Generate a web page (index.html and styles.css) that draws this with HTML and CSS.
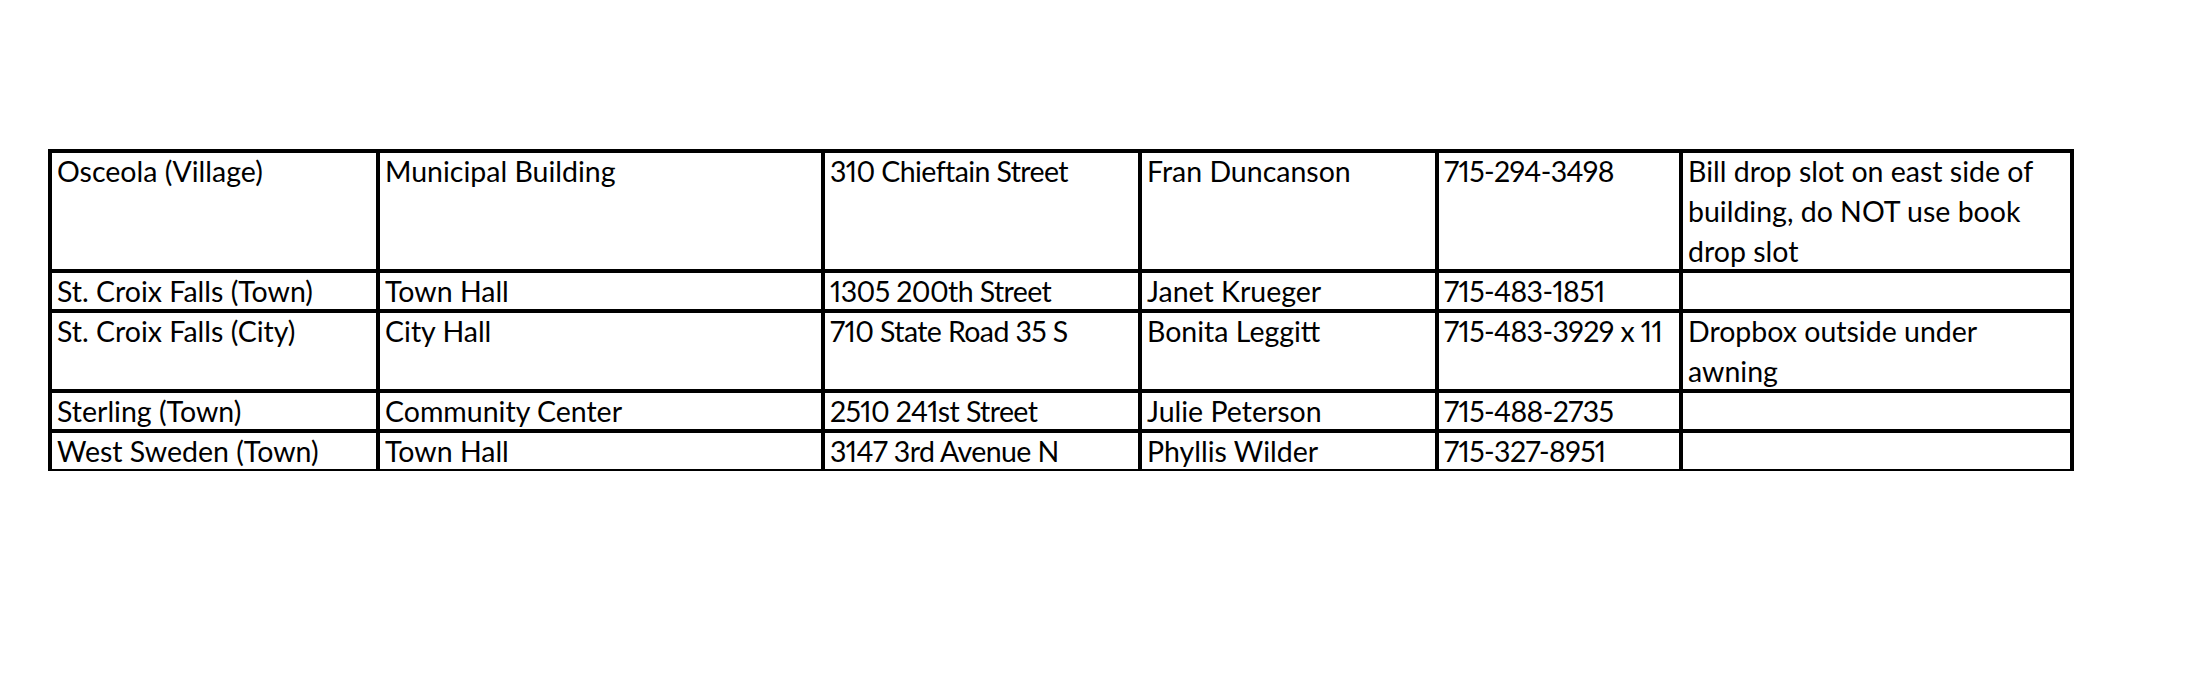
FILE: index.html
```html
<!DOCTYPE html>
<html lang="en">
<head>
<meta charset="utf-8">
<title>Polling Places</title>
<link rel="stylesheet" href="styles.css">
</head>
<body>
<table class="sites">
  <colgroup>
    <col class="c-muni">
    <col class="c-place">
    <col class="c-addr">
    <col class="c-clerk">
    <col class="c-phone">
    <col class="c-notes">
  </colgroup>
  <tbody>
    <tr>
      <td>Osceola (Village)</td>
      <td>Municipal Building</td>
      <td class="num">310 Chieftain Street</td>
      <td>Fran Duncanson</td>
      <td class="num">715-294-3498</td>
      <td>Bill drop slot on east side of<br>building, do NOT use book<br>drop slot</td>
    </tr>
    <tr>
      <td>St. Croix Falls (Town)</td>
      <td>Town Hall</td>
      <td class="num">1305 200th Street</td>
      <td>Janet Krueger</td>
      <td class="num">715-483-1851</td>
      <td></td>
    </tr>
    <tr>
      <td>St. Croix Falls (City)</td>
      <td>City Hall</td>
      <td class="num">710 State Road 35 S</td>
      <td>Bonita Leggitt</td>
      <td class="num">715-483-3929 x 11</td>
      <td>Dropbox outside under<br>awning</td>
    </tr>
    <tr>
      <td>Sterling (Town)</td>
      <td>Community Center</td>
      <td class="num">2510 241st Street</td>
      <td>Julie Peterson</td>
      <td class="num">715-488-2735</td>
      <td></td>
    </tr>
    <tr>
      <td>West Sweden (Town)</td>
      <td>Town Hall</td>
      <td class="num">3147 3rd Avenue N</td>
      <td>Phyllis Wilder</td>
      <td class="num">715-327-8951</td>
      <td></td>
    </tr>
  </tbody>
</table>
</body>
</html>
```

FILE: styles.css
```css
html, body {
  margin: 0;
  padding: 0;
  background: #ffffff;
}

body {
  font-family: Lato, "Liberation Sans", sans-serif;
  font-size: 28.5px;
  color: #000000;
  font-variant-numeric: proportional-nums;
}

.sites {
  margin: 151px 0 0 50px;
  border-collapse: separate;
  border-spacing: 0;
  table-layout: fixed;
  width: 2022px;
}

.c-muni  { width: 328px; }
.c-place { width: 445px; }
.c-addr  { width: 317px; }
.c-clerk { width: 297px; }
.c-phone { width: 244px; }
.c-notes { width: 391px; }

.sites td {
  padding: 0 0 0 7px;
  line-height: 40px;
  height: 40px;
  vertical-align: top;
  white-space: nowrap;
  outline: 4px solid #000000;
  outline-offset: -2px;
}

.sites td.num {
  letter-spacing: -0.6px;
}
```
